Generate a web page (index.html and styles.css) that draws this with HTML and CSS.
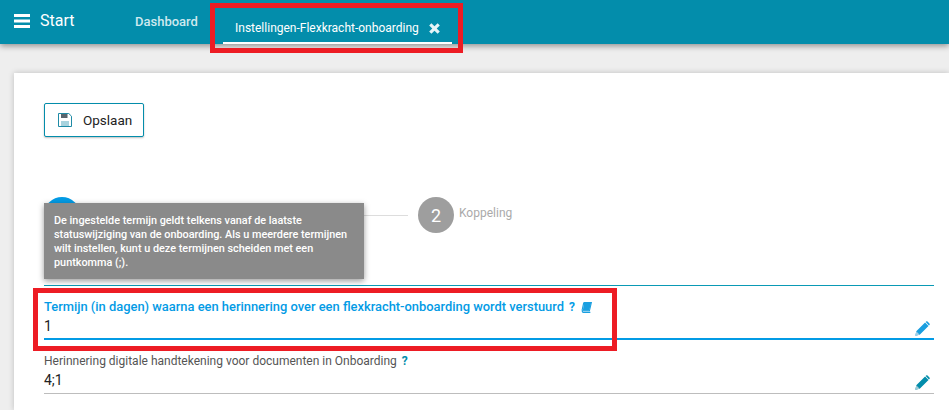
FILE: index.html
```html
<!DOCTYPE html>
<html lang="nl">
<head>
<meta charset="utf-8">
<title>Instellingen</title>
<link rel="stylesheet" href="styles.css">
</head>
<body>
<header class="topbar">
  <div class="brand">
    <svg class="menu-icon" viewBox="0 0 16 14" width="16" height="14"><path d="M0 0h16v3H0zM0 5.5h16v3H0zM0 11h16v3H0z" fill="#fff"/></svg>
    <span class="brand-text">Start</span>
  </div>
  <a class="tab">Dashboard</a>
  <div class="tab-active">
    <span class="tab-title">Instellingen-Flexkracht-onboarding</span>
    <svg class="close-icon" viewBox="0 0 12 12" width="11" height="11"><path d="M2.6.2 6 3.6 9.4.2l2.4 2.4L8.4 6l3.4 3.4-2.4 2.4L6 8.4l-3.4 3.4-2.4-2.4L3.6 6 .2 2.6z" fill="#e6f4f7"/></svg>
  </div>
</header>
<div class="highlight highlight-tab"></div>
<main class="card">
  <button class="save-btn">
    <svg class="save-icon" viewBox="0 0 14 14" width="14" height="14">
      <path d="M.5.5h10.3l2.7 2.7v10.3H.5z" fill="#fff" stroke="#1f8ba6"/>
      <rect x="3" y="1" width="6.5" height="4" fill="#59656d"/>
      <rect x="3" y="8" width="8" height="5" fill="#a9d3de"/>
    </svg>
    <span>Opslaan</span>
  </button>
  <div class="stepper">
    <div class="step-one"></div>
    <div class="step-line"></div>
    <div class="step-two">2</div>
    <span class="step-label">Koppeling</span>
    <div class="tooltip">De ingestelde termijn geldt telkens vanaf de laatste statuswijziging van de onboarding. Als u meerdere termijnen wilt instellen, kunt u deze termijnen scheiden met een puntkomma (;).</div>
  </div>
  <div class="rule"></div>
  <section class="field field-active">
    <div class="field-label">
      <span>Termijn (in dagen) waarna een herinnering over een flexkracht-onboarding wordt verstuurd</span>
      <b class="help">?</b>
      <svg class="book-icon" viewBox="0 0 12 12" width="11" height="11"><path d="M3 .7h8.3L9.2 9.6H2.3q-1 0-.9.8t1 .9h7.8M3 .7 1.1 9.5" fill="none" stroke="#1a9fe0" stroke-width="1.2"/><path d="M3.2 1h7.8L9 9.2H2z" fill="#1a9fe0"/></svg>
    </div>
    <div class="field-row">
      <span class="value">1</span>
      <svg class="pencil" viewBox="0 0 14 14" width="15" height="15"><path d="M.3 13.7 1.2 9.6 9.4 1.4l3.2 3.2-8.2 8.2zM10.3.5q.7-.6 1.4 0l1.8 1.8q.6.7 0 1.4l-.5.4L10 1z" fill="currentColor"/><path d="M1.2 9.6 4.4 12.8.3 13.7z" fill="#9fd0e8"/></svg>
    </div>
  </section>
  <section class="field field-idle">
    <div class="field-label">
      <span>Herinnering digitale handtekening voor documenten in Onboarding</span>
      <b class="help">?</b>
    </div>
    <div class="field-row">
      <span class="value">4;1</span>
      <svg class="pencil" viewBox="0 0 14 14" width="15" height="15"><path d="M.3 13.7 1.2 9.6 9.4 1.4l3.2 3.2-8.2 8.2zM10.3.5q.7-.6 1.4 0l1.8 1.8q.6.7 0 1.4l-.5.4L10 1z" fill="currentColor"/><path d="M1.2 9.6 4.4 12.8.3 13.7z" fill="#9fcbd6"/></svg>
    </div>
  </section>
  <div class="highlight highlight-field"></div>
</main>
</body>
</html>
```
FILE: styles.css
```css
* { box-sizing: border-box; }
html, body { margin: 0; padding: 0; height: 410px; overflow: hidden; }
body { position: relative; background: #eeeeee; font-family: Roboto, "Liberation Sans", sans-serif; color: #222; }

.topbar {
  height: 44px;
  background: #038dab;
  display: flex;
  align-items: flex-start;
  padding-left: 14px;
  box-shadow: 0 2px 6px rgba(0, 0, 0, .4);
  color: #fff;
}
.brand { display: flex; align-items: center; gap: 10px; height: 44px; padding-bottom: 1px; width: 121px; }
.menu-icon { display: block; margin-top: -2px; }
.brand-text { font-size: 16px; margin-top: -3px; }
.tab { font-size: 13px; font-weight: 500; color: #cfe9ef; line-height: 44px; width: 88px; }
.tab-active {
  width: 229px;
  height: 44px;
  border-bottom: 2px solid #fff;
  display: flex;
  align-items: center;
  padding: 14px 0 0 12px;
  font-size: 12px;
  color: #fff;
  gap: 10px;
}
.tab-title { white-space: nowrap; flex: none; }
.close-icon { display: block; flex: none; }

.highlight { position: absolute; border: 5px solid #ed1c24; pointer-events: none; }
.highlight-tab { left: 210px; top: 3px; width: 253px; height: 50px; }
.highlight-field { left: 19px; top: 215px; width: 584px; height: 63px; }

.card {
  position: absolute;
  left: 14px;
  top: 73px;
  right: 0;
  bottom: 0;
  background: #fff;
  box-shadow: 0 0 6px rgba(0, 0, 0, .2);
  padding: 30px 15px 0 30px;
}
.save-btn {
  display: flex;
  align-items: center;
  gap: 11px;
  width: 100px;
  height: 34px;
  padding: 0 0 0 13px;
  background: #fff;
  border: 1px solid #038dab;
  border-radius: 2px;
  box-shadow: 0 1px 2px rgba(0, 0, 0, .25);
  font: 13.5px Roboto, "Liberation Sans", sans-serif;
  color: #222;
}
.save-icon { display: block; }

.stepper { position: relative; height: 78px; margin-top: 60px; }
.step-one { position: absolute; left: 0; top: 0; width: 36px; height: 36px; border-radius: 50%; background: #039be5; }
.step-line { position: absolute; left: 320px; top: 18px; width: 44px; height: 1px; background: #ddd; }
.step-two {
  position: absolute; left: 374px; top: 0;
  width: 36px; height: 36px; border-radius: 50%;
  background: #9e9e9e; color: #fff; font-size: 18px;
  display: flex; align-items: center; justify-content: center;
}
.step-label { position: absolute; left: 415px; top: 9px; font-size: 12px; color: #aaa; }
.tooltip {
  position: absolute;
  left: 0;
  top: 6px;
  width: 320px;
  height: 76px;
  padding: 11px 10px;
  background: #8a8a8a;
  color: #fff;
  font-size: 10.85px;
  font-weight: 500;
  line-height: 14px;
  box-shadow: 0 2px 6px rgba(0, 0, 0, .4);
}

.rule { height: 1px; background: #0a9ab5; margin-top: 10px; }
.field-label { display: flex; align-items: center; gap: 5px; line-height: 14px; }
.field-row { display: flex; justify-content: space-between; align-items: center; height: 24px; }
.value { font-size: 14px; color: #222; }
.help { font-size: 12px; font-weight: 700; }
.pencil { display: block; margin-right: 4px; }
.book-icon { display: block; margin-left: 1px; }

.field-active { margin-top: 14px; height: 40px; border-bottom: 2px solid #039be5; }
.field-active .field-label { color: #039be5; font-size: 12.9px; font-weight: 500; }
.field-active .help { color: #039be5; }
.field-active .pencil { color: #1a9fe0; margin-top: 4px; }

.field-idle { margin-top: 14px; height: 40px; border-bottom: 1px solid #bdbdbd; }
.field-idle .field-label { color: #555; font-size: 12px; }
.field-idle .help { color: #038dab; }
.field-idle .pencil { color: #038dab; margin-top: 4px; }
```
